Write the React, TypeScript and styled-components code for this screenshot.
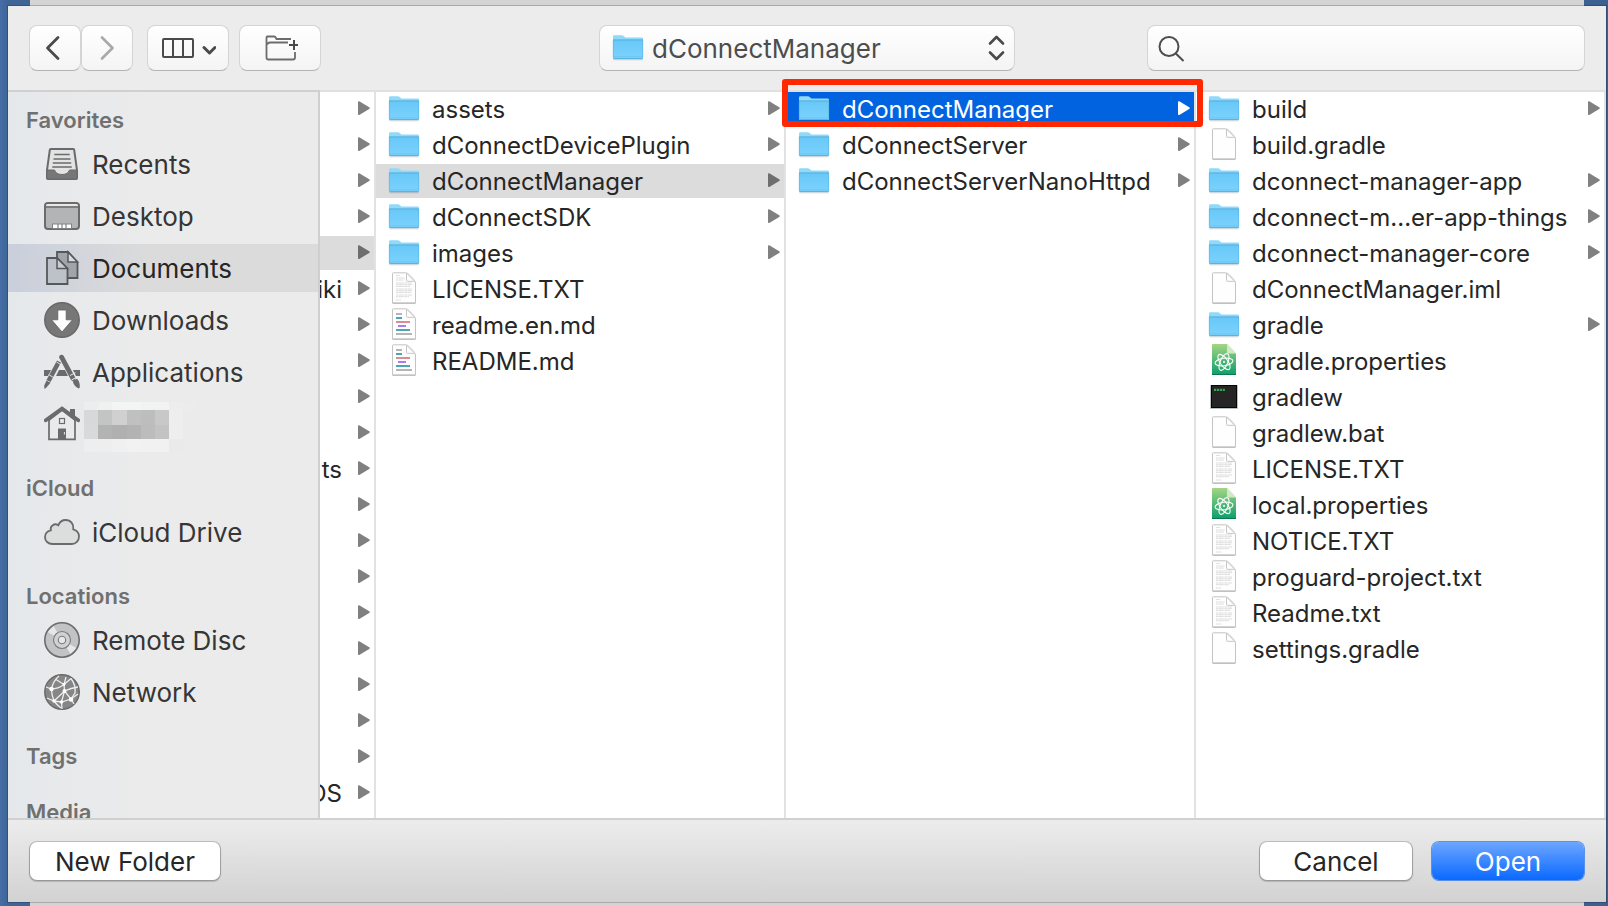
import React from 'react';
import styled, { createGlobalStyle, css } from 'styled-components';

const GlobalStyle = createGlobalStyle`
  *, *::before, *::after { box-sizing: border-box; }
  body {
    margin: 0;
    font-family: Inter, "Liberation Sans", sans-serif;
    font-size: 24px;
    color: #262626;
    background: #42699f;
  }
  button, input, select { font: inherit; color: inherit; margin: 0; }
  ul { list-style: none; margin: 0; padding: 0; }
`;

/* ---------- desktop and window ---------- */

const Desktop = styled.div`
  position: relative;
  display: flex;
  height: 100vh;
  min-height: 480px;
  padding: 6px 2px 4px 8px;
  background: linear-gradient(90deg, #456ea6, #3f6597 8px, #3f6597 50%, #3c608f);
`;

const WindowBehind = styled.div`
  position: absolute;
  inset: 0 24px 0 30px;
  background: #d4d4d4;
`;

const Dialog = styled.main`
  position: relative;
  flex: 1;
  min-width: 0;
  display: flex;
  flex-direction: column;
  background: #ececec;
  box-shadow: 0 0 0 1px rgba(0, 0, 0, 0.2);
`;

/* ---------- toolbar ---------- */

const Toolbar = styled.header`
  flex: none;
  display: grid;
  grid-template-columns: 1fr 416px 1fr;
  align-items: center;
  height: 84px;
  padding: 0 21px;
`;

const Tools = styled.div`
  display: flex;
  align-items: center;
`;

const raised = css`
  height: 46px;
  border: 1px solid #d4d4d4;
  border-bottom-color: #b4b4b4;
  border-radius: 8px;
  background: linear-gradient(#ffffff, #f4f4f4);
`;

const ToolButton = styled.button<{ $width: number; $gap?: number }>`
  ${raised}
  display: flex;
  align-items: center;
  justify-content: center;
  width: ${(p) => p.$width}px;
  margin-left: ${(p) => p.$gap ?? 0}px;
  padding: 0;
`;

const PathPicker = styled.div`
  position: relative;

  > svg:first-of-type { position: absolute; left: 13px; top: 6px; pointer-events: none; }
  > svg:last-of-type { position: absolute; right: 9px; top: 10px; pointer-events: none; }
`;

const PathSelect = styled.select`
  ${raised}
  appearance: none;
  display: block;
  width: 100%;
  padding: 0 40px 0 52px;
  font-size: 26px;
  color: #4d4d4d;
`;

const SearchBox = styled.label`
  ${raised}
  justify-self: end;
  display: flex;
  align-items: center;
  width: 100%;
  max-width: 438px;
  padding: 0 10px;
  gap: 8px;
`;

const SearchInput = styled.input`
  flex: 1;
  min-width: 0;
  border: 0;
  outline: 0;
  padding: 0;
  background: transparent;
`;

/* ---------- browser area ---------- */

const Browser = styled.div`
  flex: 1;
  min-height: 0;
  display: flex;
`;

const Sidebar = styled.nav`
  flex: none;
  width: 312px;
  overflow: hidden;
  border-top: 2px solid #d0d0d0;
  border-right: 2px solid #cfcfcf;
  background: linear-gradient(90deg, #e5e8eb, #ebebeb 45%);
`;

const SectionTitle = styled.h2<{ $first?: boolean }>`
  display: flex;
  align-items: flex-end;
  height: ${(p) => (p.$first ? 48 : 56)}px;
  margin: 0;
  padding: 0 18px 8px;
  font-size: 22px;
  line-height: 24px;
  font-weight: 600;
  color: #707070;
`;

const PlaceButton = styled.button<{ $selected?: boolean }>`
  display: flex;
  align-items: center;
  gap: 12px;
  width: 100%;
  height: 48px;
  margin-bottom: 4px;
  padding: 0 0 0 36px;
  border: 0;
  background: ${(p) => (p.$selected ? 'linear-gradient(90deg, #c9cfdb, #dbdbdb 45%)' : 'none')};
  font-size: 26px;
  text-align: left;
  color: ${(p) => (p.$selected ? '#262626' : '#363636')};

  > svg { flex: none; }
`;

const Mosaic = styled.svg`
  margin-left: -8px;
`;

const Column = styled.ul<{ $narrow?: boolean }>`
  flex: ${(p) => (p.$narrow ? '0 0 56px' : '1 1 0')};
  min-width: 0;
  position: relative;
  background: #fff;
  border-top: 2px solid #e0e0e0;
  border-right: 2px solid #e2e2e2;
`;

const Row = styled.button<{ $state?: 'open' | 'active'; $narrow?: boolean }>`
  display: flex;
  align-items: center;
  gap: 12px;
  width: 100%;
  height: 34px;
  margin-bottom: 2px;
  padding: 0 4px 0 ${(p) => (p.$narrow ? 0 : 12)}px;
  border: 0;
  overflow: hidden;
  text-align: left;
  line-height: 32px;
  background: ${(p) => (p.$state === 'active' ? '#0263e1' : p.$state === 'open' ? '#dcdcdc' : 'transparent')};
  color: ${(p) => (p.$state === 'active' ? '#ffffff' : '#262626')};

  > svg { flex: none; }
  > svg:last-child {
    fill: ${(p) => (p.$state === 'active' ? '#ffffff' : p.$state === 'open' ? '#6e6e6e' : '#808080')};
  }
`;

const FileName = styled.span`
  flex: 1;
  min-width: 0;
  padding-top: 2px;
  white-space: nowrap;
`;

const NameTail = styled.span`
  flex: 1;
  min-width: 0;
  display: flex;
  justify-content: flex-end;
  padding: 2px 4px 0 0;
  overflow: hidden;
  white-space: nowrap;
`;

const Highlight = styled.li`
  position: absolute;
  z-index: 2;
  top: -13px;
  left: -4px;
  right: -9px;
  height: 48px;
  border: 6px solid #ff2800;
  border-radius: 3px;
  pointer-events: none;
`;

const HighlightColumn = styled(Column)`
  z-index: 1;
`;

/* ---------- footer ---------- */

const Footer = styled.footer`
  flex: none;
  display: flex;
  align-items: flex-start;
  gap: 20px;
  height: 84px;
  padding: 22px 22px 0;
  border-top: 2px solid #d0d0d0;
  background: linear-gradient(#ececec, #d2d2d2);
`;

const PushButton = styled.button<{ $primary?: boolean; $wide?: boolean }>`
  width: ${(p) => (p.$wide ? 190 : 152)}px;
  height: 38px;
  margin-right: ${(p) => (p.$wide ? 'auto' : 0)};
  padding: 2px 0 0;
  border: 0;
  border-radius: 7px;
  font-size: 26px;
  line-height: 36px;
  color: ${(p) => (p.$primary ? '#ffffff' : '#262626')};
  background: ${(p) => (p.$primary ? 'linear-gradient(#6ca6ff, #0a69ff)' : '#ffffff')};
  box-shadow: ${(p) =>
    p.$primary
      ? '0 0 0 1px rgba(30, 110, 240, 0.7)'
      : '0 0 0 1px rgba(0, 0, 0, 0.16), 0 1px 1px 1px rgba(0, 0, 0, 0.16)'};
`;

/* ---------- file icons ---------- */

type Kind = 'folder' | 'blank' | 'text' | 'markdown' | 'atom' | 'exec';

const HiddenDefs = styled.svg`
  position: absolute;
`;

const Defs = () => (
  <HiddenDefs width="0" height="0" aria-hidden="true">
    <defs>
      <linearGradient id="folder" x1="0" y1="0" x2="0" y2="1">
        <stop offset="0" stopColor="#68c8f8" />
        <stop offset="1" stopColor="#7cd2fd" />
      </linearGradient>
      <linearGradient id="green" x1="0" y1="0" x2="0" y2="1">
        <stop offset="0" stopColor="#a3d583" />
        <stop offset="1" stopColor="#0a9f6b" />
      </linearGradient>
    </defs>
  </HiddenDefs>
);

const FolderIcon = () => (
  <svg width="32" height="34" viewBox="0 0 32 34" aria-hidden="true">
    <path d="M1.5 28.800h29" stroke="#000" strokeOpacity=".16" strokeWidth="1" />
    <path d="M1 27V5.600Q1 4.200 2.400 4.200H10q.9 0 1.600.7l1.300 1.200q.5.5 1.300.5H29.600q1.400 0 1.400 1.400V27q0 1-1 1H2q-1 0-1-1Z" fill="#8fd9fb" />
    <path d="M1 9H31V27q0 1-1 1H2q-1 0-1-1Z" fill="url(#folder)" />
    <path d="M1 8.900H31M1.500 27.700H30.500" stroke="#4aa3cf" strokeWidth=".8" />
    <path d="M1.300 9v18M30.700 9v18" stroke="#58b4e0" strokeWidth=".6" />
    <path d="M2 25.800H30" stroke="#6cc2ec" strokeWidth=".8" />
  </svg>
);

const DocBase = ({ children }: { children?: React.ReactNode }) => (
  <svg width="32" height="34" viewBox="0 0 32 34" aria-hidden="true">
    <path d="M4.500 31.300H27.500" stroke="#8c8c8c" strokeOpacity=".6" strokeWidth="1.200" />
    <path d="M4.500 1.500Q4.500.8 5.200.8H17.500Q19.500.8 21 2.500L25.500 7.200Q27.500 9.500 27.500 11V30.800H4.500Z" fill="#fefefe" stroke="#c4c4c4" />
    {children}
    <path d="M18.500 1V8.500Q18.500 9.300 19.300 9.300H26.800" fill="#fff" stroke="#c6c6c6" />
    <path d="M19 1.500 26.500 9Z" stroke="#d4d4d4" />
  </svg>
);

const MarkdownLines = () => (
  <g strokeWidth="2">
    <path d="M8 6h6" stroke="#b5b5b5" />
    <path d="M8 10h6" stroke="#4ba5b4" />
    <path d="M8 14h14" stroke="#d98e94" />
    <path d="M10 18h8" stroke="#a77bf5" />
    <path d="M8 22h14" stroke="#4ba5b4" />
    <path d="M8 26h16" stroke="#b5b5b5" />
  </g>
);

const TextLines = () => (
  <g stroke="#8a8a8a" strokeOpacity=".42" strokeWidth=".7" strokeDasharray="2.500 .4 4 .3 1.500 .3">
    <path d="M8 3.500h4M8 6h9M8 8h8M8 11h16M8 12.700h16M8 14.400h14M8 17h16M8 18.700h16M8 20.400h15M8 23h16M8 24.700h13M8 28h5" />
  </g>
);

const AtomIcon = () => (
  <svg width="32" height="34" viewBox="0 0 32 34" aria-hidden="true">
    <path d="M4 1Q4 0 5 0H19L28 9.500V31H4Z" fill="url(#green)" />
    <path d="M4 30.500H28" stroke="#087a52" />
    <path d="M19 0 28 9.500H20Q19 9.500 19 8.500Z" fill="#d3e8c6" />
    <g fill="none" stroke="#fff" strokeWidth="1.100">
      <ellipse cx="16" cy="18" rx="9" ry="3.800" transform="rotate(-8 16 18)" />
      <ellipse cx="16" cy="18" rx="9" ry="3.800" transform="rotate(54 16 18)" />
      <ellipse cx="16" cy="18" rx="9" ry="3.800" transform="rotate(114 16 18)" />
    </g>
    <circle cx="16" cy="18" r="1" fill="#fff" />
  </svg>
);

const ExecIcon = () => (
  <svg width="32" height="34" viewBox="0 0 32 34" aria-hidden="true">
    <rect x="2" y="5" width="28" height="24" rx="1" fill="#8b979c" fillOpacity=".6" />
    <rect x="3.500" y="5.500" width="25" height="22" fill="#252525" stroke="#050505" />
    <path d="M6 9.800h11" stroke="#37a54c" strokeWidth="2.200" strokeDasharray="2.200 .7" />
  </svg>
);

const FileIcon = ({ kind }: { kind: Kind }) => {
  if (kind === 'folder') return <FolderIcon />;
  if (kind === 'atom') return <AtomIcon />;
  if (kind === 'exec') return <ExecIcon />;
  return (
    <DocBase>
      {kind === 'text' && <TextLines />}
      {kind === 'markdown' && <MarkdownLines />}
    </DocBase>
  );
};

const Arrow = () => (
  <svg width="12" height="34" viewBox="0 0 12 34" aria-hidden="true">
    <path d="M0 10.200Q0 8.700 1.300 9.300L11.200 15.300Q12.400 16 11.200 16.900L1.300 22.900Q0 23.600 0 22.100Z" />
  </svg>
);

/* ---------- sidebar icons ---------- */

const G = '#6b6b6b';

const Icon36 = ({ children }: { children: React.ReactNode }) => (
  <svg width="36" height="36" viewBox="0 0 36 36" fill="none" aria-hidden="true">
    {children}
  </svg>
);

const RecentsIcon = () => (
  <Icon36>
    <path d="M6.500 3H29.500Q30 3 30.200 4L33 24V32Q33 33 32 33H4Q3 33 3 32V24L5.800 4Q6 3 6.500 3Z" fill="#e3e3e3" stroke={G} strokeWidth="2" />
    <path d="M10.300 8.500H25.700M9.500 13H26.500M8.800 17H27.200M8.200 21H27.800" stroke={G} strokeWidth="1.700" />
    <path d="M3 24H10.500Q12 28.500 18 28.500T25.500 24H33V33H3Z" fill="#777" stroke={G} />
  </Icon36>
);

const DesktopIcon = () => (
  <Icon36>
    <rect x="1" y="5" width="34" height="26" rx="3" fill="#b3b4b5" stroke={G} strokeWidth="2" />
    <path d="M2 8Q2 6 4 6H32Q34 6 34 8Z" fill="#e8e8e8" />
    <path d="M1 9H35" stroke={G} strokeWidth="1.500" />
    <rect x="8.500" y="26" width="19" height="4.500" fill="#fff" stroke="#828282" />
    <path d="M14 26v5M18 26v5M22 26v5" stroke="#828282" strokeWidth="1.200" />
  </Icon36>
);

const DocumentsIcon = () => (
  <Icon36>
    <path d="M13 2H24L33.500 12V28H13Z" fill="#a1a4a8" stroke="#55585b" strokeWidth="1.800" />
    <path d="M24 2V12H33.500Z" fill="#d9dbde" stroke="#55585b" strokeWidth="1.500" />
    <path d="M3 8H13L23.500 18.500V34H3Z" fill="#bdc2c9" stroke="#55585b" strokeWidth="1.800" />
    <path d="M13 8V18.500H23.500Z" fill="#c9cdd3" stroke="#55585b" strokeWidth="1.500" />
  </Icon36>
);

const DownloadsIcon = () => (
  <Icon36>
    <circle cx="18" cy="18" r="17.200" fill="#777" stroke="#686868" strokeWidth="1.500" />
    <path d="M13.800 8H22.200V17.800H28.500L18 30 7.500 17.800H13.800Z" fill="#fff" stroke="#5f5f5f" strokeWidth=".8" />
  </Icon36>
);

const ApplicationsIcon = () => (
  <Icon36>
    <path d="M0 16H7L4 22H0ZM15 16H21L24 22H12ZM29 16H36V22H32Z" fill={G} />
    <path d="M15 7.500 4.500 27" stroke={G} strokeWidth="4.600" />
    <path d="M17.600 3.200 29 24.500" stroke={G} strokeWidth="4.800" strokeLinecap="round" />
    <path d="M12.500 8 17.500 11M9.500 23.500 4.500 20.500" stroke="#e9eaec" strokeWidth=".9" />
    <path d="M2.500 26.500 6.500 28.800 1.500 34.500H.3V31.500Z" fill={G} />
    <path d="M26 21.500 31.500 18.700M27.500 26 33 23" stroke="#e9eaec" strokeWidth="1" />
    <path d="M28.700 27 33 24.800Q36 27.500 35.800 33.500L34.800 34.500Q30 32.500 28.700 27Z" fill={G} />
  </Icon36>
);

const HomeIcon = () => (
  <Icon36>
    <path d="M26 3H31V13L26 9Z" fill={G} />
    <path d="M5 14V33.300H31V14L18 4Z" fill="#e9eaec" stroke={G} strokeWidth="1.700" />
    <path d="M1.800 14.300 18 2.600 34.200 14.300" stroke={G} strokeWidth="3.800" strokeLinecap="round" />
    <rect x="15.500" y="12.500" width="5" height="5" stroke={G} strokeWidth="1.200" />
    <rect x="14" y="22.500" width="8" height="11" fill={G} />
    <path d="M20.400 26v2.500" stroke="#e9eaec" />
  </Icon36>
);

const CloudIcon = () => (
  <Icon36>
    <path
      d="M8.500 30C4 30 1 27 1 23.200 1 19.600 3.600 17 6.800 16.300 5.800 11.800 10.500 8.700 14.300 11.300 15.600 7.900 18.600 6 21.700 6 26.600 6 30 10 29.300 15.300 32.700 16.200 35 19 35 22.600 35 26.800 31.900 30 27.800 30Z"
      fill="#dcdddd"
      stroke={G}
      strokeWidth="1.800"
    />
  </Icon36>
);

const DiscIcon = () => (
  <Icon36>
    <circle cx="18" cy="18" r="17.200" fill="#c1c3c4" />
    <path d="M18 18 3.500 10 9.500 4ZM18 18 32.500 26 26.500 32Z" fill="#e6e7e8" />
    <circle cx="18" cy="18" r="17.200" stroke={G} strokeWidth="1.600" />
    <circle cx="18" cy="18" r="8.500" fill="#cfd1d2" stroke="#7a7a7a" strokeWidth="1.100" />
    <circle cx="18" cy="18" r="3.700" fill="#e6e6e6" stroke="#7a7a7a" strokeWidth="1.100" />
  </Icon36>
);

const NetworkIcon = () => (
  <Icon36>
    <circle cx="18" cy="18" r="17.200" fill="#868686" stroke={G} strokeWidth="1.500" />
    <g stroke="#eee" strokeWidth="1.300">
      <path d="M15 2Q9 7 7.500 15 7.500 21 10 27 13 31 17 34" />
      <path d="M22 3 20 10.500 20.500 17 27 25 30 30" />
      <path d="M2 13 7.500 15 Q14 15 20 10.500L27 4.500" />
      <path d="M34 13Q27 14 20.500 17L10 27 3 24" />
      <path d="M10 27 17.500 28 27 25 34 20" />
      <path d="M20.500 17 17.500 28 18 35" />
      <path d="M27 4.500Q32 11 31 19L27 25" />
      <path d="M12 5.500 20 10.500" />
    </g>
    <g fill="#fff">
      <circle cx="7.500" cy="15" r="2.200" />
      <circle cx="20.500" cy="17" r="2" />
      <circle cx="10" cy="27" r="1.700" />
      <circle cx="27" cy="25.500" r="2.200" />
      <circle cx="17.500" cy="28" r="1.800" />
      <circle cx="20" cy="10.500" r="1.400" />
    </g>
  </Icon36>
);

const shades = [
  ['#ebedee', '#eff0f0', '#f3f4f4', '#f3f4f4', '#f1f2f2', '#f1f2f2', '#ededed', '#ececec'],
  ['#d6d8d9', '#c3c4c4', '#d0d0d0', '#c0c0c0', '#bdbdbd', '#c8c8c8', '#eeeeee', '#ebebeb'],
  ['#d8d9db', '#b3b3b3', '#b0b0b0', '#b3b3b3', '#bcbcbc', '#c3c3c3', '#eeeeee', '#ebebeb'],
  ['#eeeeee', '#eeeeee', '#f0f0f0', '#f2f2f2', '#f1f1f1', '#f1f1f1', '#eaeaea', '#ebebeb'],
];
const bandTop = [6, 14, 29, 43];
const bandHeight = [8, 15, 14, 13];

const HiddenName = () => (
  <Mosaic width="112" height="56" viewBox="0 0 112 56" role="img" aria-label="Home folder" shapeRendering="crispEdges">
    {shades.map((band, r) =>
      band.map((fill, c) => (
        <rect key={`${r}-${c}`} x={Math.round(c * 14.2)} y={bandTop[r]} width={15} height={bandHeight[r]} fill={fill} />
      )),
    )}
  </Mosaic>
);

/* ---------- data ---------- */

interface Place {
  name?: string;
  icon: React.ReactNode;
  selected?: boolean;
}

const sections: { title: string; places: Place[] }[] = [
  {
    title: 'Favorites',
    places: [
      { name: 'Recents', icon: <RecentsIcon /> },
      { name: 'Desktop', icon: <DesktopIcon /> },
      { name: 'Documents', icon: <DocumentsIcon />, selected: true },
      { name: 'Downloads', icon: <DownloadsIcon /> },
      { name: 'Applications', icon: <ApplicationsIcon /> },
      { icon: <HomeIcon /> },
    ],
  },
  { title: 'iCloud', places: [{ name: 'iCloud Drive', icon: <CloudIcon /> }] },
  {
    title: 'Locations',
    places: [
      { name: 'Remote Disc', icon: <DiscIcon /> },
      { name: 'Network', icon: <NetworkIcon /> },
    ],
  },
  { title: 'Tags', places: [] },
  { title: 'Media', places: [] },
];

const parentTails = ['', '', '', '', '', 'iki', '', '', '', '', 'ts', '', '', '', '', '', '', '', '', 'OS'];

interface Entry {
  name: string;
  kind: Kind;
  state?: 'open' | 'active';
}

const repoEntries: Entry[] = [
  { name: 'assets', kind: 'folder' },
  { name: 'dConnectDevicePlugin', kind: 'folder' },
  { name: 'dConnectManager', kind: 'folder', state: 'open' },
  { name: 'dConnectSDK', kind: 'folder' },
  { name: 'images', kind: 'folder' },
  { name: 'LICENSE.TXT', kind: 'text' },
  { name: 'readme.en.md', kind: 'markdown' },
  { name: 'README.md', kind: 'markdown' },
];

const managerEntries: Entry[] = [
  { name: 'dConnectManager', kind: 'folder', state: 'active' },
  { name: 'dConnectServer', kind: 'folder' },
  { name: 'dConnectServerNanoHttpd', kind: 'folder' },
];

const projectEntries: Entry[] = [
  { name: 'build', kind: 'folder' },
  { name: 'build.gradle', kind: 'blank' },
  { name: 'dconnect-manager-app', kind: 'folder' },
  { name: 'dconnect-m...er-app-things', kind: 'folder' },
  { name: 'dconnect-manager-core', kind: 'folder' },
  { name: 'dConnectManager.iml', kind: 'blank' },
  { name: 'gradle', kind: 'folder' },
  { name: 'gradle.properties', kind: 'atom' },
  { name: 'gradlew', kind: 'exec' },
  { name: 'gradlew.bat', kind: 'blank' },
  { name: 'LICENSE.TXT', kind: 'text' },
  { name: 'local.properties', kind: 'atom' },
  { name: 'NOTICE.TXT', kind: 'text' },
  { name: 'proguard-project.txt', kind: 'text' },
  { name: 'Readme.txt', kind: 'text' },
  { name: 'settings.gradle', kind: 'blank' },
];

const Entries = ({ items }: { items: Entry[] }) => (
  <>
    {items.map((e) => (
      <li key={e.name}>
        <Row type="button" $state={e.state}>
          <FileIcon kind={e.kind} />
          <FileName>{e.name}</FileName>
          {e.kind === 'folder' && <Arrow />}
        </Row>
      </li>
    ))}
  </>
);

/* ---------- page ---------- */

export default function App() {
  return (
    <Desktop>
      <GlobalStyle />
      <Defs />
      <WindowBehind />
      <Dialog>
        <Toolbar>
          <Tools>
            <ToolButton type="button" $width={52} aria-label="Back">
              <svg width="20" height="26" viewBox="0 0 20 26" fill="none" stroke="#4a4a4a" strokeWidth="2.800" strokeLinecap="round" strokeLinejoin="round">
                <path d="M13 2.500 2.500 13 13 23.500" />
              </svg>
            </ToolButton>
            <ToolButton type="button" $width={52} aria-label="Forward">
              <svg width="16" height="26" viewBox="0 0 16 26" fill="none" stroke="#a9a9a9" strokeWidth="2.600" strokeLinecap="round" strokeLinejoin="round">
                <path d="M3 2.500 13.500 13 3 23.500" />
              </svg>
            </ToolButton>
            <ToolButton type="button" $width={82} $gap={14} aria-label="Column view">
              <svg width="56" height="22" viewBox="0 0 56 22" fill="none" stroke="#4a4a4a" strokeWidth="2">
                <rect x="3" y="2" width="30" height="18" rx="1" />
                <path d="M13 2v18M23 2v18" />
                <path d="M44 10.500 49.500 16 55 10.500" strokeWidth="3" strokeLinecap="round" strokeLinejoin="round" />
              </svg>
            </ToolButton>
            <ToolButton type="button" $width={82} $gap={10} aria-label="New folder options">
              <svg width="36" height="26" viewBox="0 0 36 26" fill="none" stroke="#6c6c6c" strokeWidth="1.800">
                <path d="M33 17V22.500Q33 24.500 31 24.500H6.500Q4.500 24.500 4.500 22.500V2.500Q4.500 1.500 5.500 1.500H12Q13 1.500 13.500 2.200L14.500 4H29" />
                <path d="M5 9.500Q6 7.500 8 7.500H26" />
                <path d="M32 5V15M27 10H37" stroke="#4a4a4a" strokeWidth="2" />
              </svg>
            </ToolButton>
          </Tools>
          <PathPicker>
            <PathSelect aria-label="Current folder" defaultValue="dConnectManager">
              <option>dConnectManager</option>
            </PathSelect>
            <FolderIcon />
            <svg width="20" height="26" viewBox="0 0 20 26" fill="none" stroke="#4a4a4a" strokeWidth="2.600" strokeLinecap="round" strokeLinejoin="round" aria-hidden="true">
              <path d="M4 8.500 10.500 2 17 8.500M4 17.500 10.500 24 17 17.500" />
            </svg>
          </PathPicker>
          <SearchBox>
            <svg width="28" height="28" viewBox="0 0 28 28" fill="none" stroke="#4d4d4d" strokeWidth="2" aria-hidden="true">
              <circle cx="11" cy="12.500" r="9.500" />
              <path d="M17.800 19.500 25.500 27" />
            </svg>
            <SearchInput type="text" aria-label="Search" />
          </SearchBox>
        </Toolbar>

        <Browser>
          <Sidebar>
            {sections.map((s, i) => (
              <section key={s.title}>
                <SectionTitle $first={i === 0}>{s.title}</SectionTitle>
                {s.places.map((p) => (
                  <PlaceButton key={p.name ?? 'home'} type="button" $selected={p.selected}>
                    {p.icon}
                    {p.name ?? <HiddenName />}
                  </PlaceButton>
                ))}
              </section>
            ))}
          </Sidebar>

          <Column $narrow>
            {parentTails.map((tail, i) => (
              <li key={i}>
                <Row type="button" $narrow $state={i === 4 ? 'open' : undefined} aria-label={tail || 'Folder'}>
                  <NameTail>{tail}</NameTail>
                  <Arrow />
                </Row>
              </li>
            ))}
          </Column>
          <Column>
            <Entries items={repoEntries} />
          </Column>
          <HighlightColumn>
            <Entries items={managerEntries} />
            <Highlight aria-hidden="true" />
          </HighlightColumn>
          <Column>
            <Entries items={projectEntries} />
          </Column>
        </Browser>

        <Footer>
          <PushButton type="button" $wide>New Folder</PushButton>
          <PushButton type="button">Cancel</PushButton>
          <PushButton type="button" $primary>Open</PushButton>
        </Footer>
      </Dialog>
    </Desktop>
  );
}
